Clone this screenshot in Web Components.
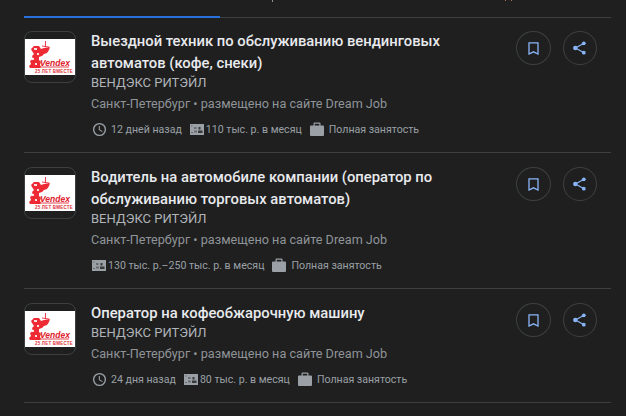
<!DOCTYPE html>
<html lang="ru">
<head>
<meta charset="utf-8">
<title>Вакансии</title>
<style>
  html, body { margin: 0; padding: 0; height: 100%; overflow: hidden; }
  body { background: #1f1f1f; font-family: Roboto, "Liberation Sans", Arial, sans-serif; }
</style>
</head>
<body>
<job-list>
  <job-tabs slot="tabs"></job-tabs>
  <job-card title-text="Выездной техник по обслуживанию вендинговых автоматов (кофе, снеки)" age="12 дней назад" pay="110 тыс. р. в месяц"></job-card>
  <job-card title-text="Водитель на автомобиле компании (оператор по обслуживанию торговых автоматов)" pay="130 тыс. р.–250 тыс. р. в месяц"></job-card>
  <job-card title-text="Оператор на кофеобжарочную машину" age="24 дня назад" pay="80 тыс. р. в месяц"></job-card>
</job-list>

<script>
const ICONS = {
  clock: `<svg width="15" height="15" viewBox="0 0 24 24" fill="currentColor"><path d="M12 1.500a10.500 10.500 0 1 0 0 21 10.500 10.500 0 0 0 0-21zm0 18.800a8.300 8.300 0 1 1 0-16.600 8.300 8.300 0 0 1 0 16.600zm.6-13.800h-1.700v6.300l5.300 3.200.9-1.400-4.500-2.700z"/></svg>`,
  money: `<svg width="14" height="11" viewBox="0 0 14 11"><path fill="currentColor" d="M0 0h14v11H0z"/><path fill="#6a6d70" d="M1 1.500h1.500v1H1zM1 8h2v1H1zM4 3h2.500v2H4zM4 6.500h3v2H4z"/><path fill="#3a3a3a" d="M8.500 3h2v2.500h-2zM8 6.500h4.500V9H8z"/></svg>`,
  bag: `<svg width="14" height="14" viewBox="0 0 14 14" fill="currentColor"><path d="M4.500 0.500h5a1 1 0 0 1 1 1V3.500H13a1 1 0 0 1 1 1V13a1 1 0 0 1-1 1H1a1 1 0 0 1-1-1V4.500a1 1 0 0 1 1-1h2.500V1.500a1 1 0 0 1 1-1zm.2 1.200v1.800h4.600V1.700z" fill-rule="evenodd"/></svg>`,
  bookmark: `<svg width="11" height="13" viewBox="0 0 11 13" fill="none" stroke="currentColor" stroke-width="1.300"><path d="M1 .8h9v11.200L5.500 9.800 1 12z"/></svg>`,
  share: `<svg width="13" height="14" viewBox="0 0 13 14" fill="currentColor" stroke="currentColor"><path fill="none" stroke-width="1.200" d="M10.500 2.500 2.500 7l8 4.500"/><circle cx="10.800" cy="2.300" r="1.900" stroke="none"/><circle cx="2.300" cy="7" r="2.200" stroke="none"/><circle cx="10.800" cy="11.700" r="1.900" stroke="none"/></svg>`,
};

// mascot is a rough drawing, the wordmark stays real text
const LOGO = `<svg width="50" height="36" viewBox="0 0 50 36" style="display:block">
  <defs><filter id="soft"><feGaussianBlur stdDeviation=".35"/></filter></defs>
  <rect width="50" height="36" fill="#fff"/>
  <g filter="url(#soft)">
    <path fill="#ee2a35" d="M6 10l3-3 5 0 2 3 3-1 6-1-1 3-2 3-3 1-2 2-3 1 0 3 2 2-1 3 1 2-1 1H7l-2 0-1-2 2-2-1-3 3-2-1-3 2-2-2-3z"/>
    <path stroke="#ee2a35" stroke-width=".9" fill="none" d="M20.500 2v6M17 7l7 1"/>
    <path fill="#fff" opacity=".85" d="M9 9h3v2H9zM12 14h2v2h-2zM7 19h2v2H7zM10 24h2v2h-2z"/>
    <path stroke="#e0202c" stroke-width=".8" d="M13 28h31"/>
  </g>
</svg>`;

class JobTabs extends HTMLElement {
  constructor() {
    super();
    this.attachShadow({ mode: "open" }).innerHTML = `
      <style>
        :host { display: block; height: 18px; margin-bottom: -1px; position: relative; }
        .bar { position: absolute; left: 0; right: 0; bottom: 0; height: 1px; background: #3c4043; }
        .active { position: absolute; left: 0; bottom: 0; width: 196px; height: 2px; background: #2a70dc; }
        .tip { position: absolute; top: 0; width: 1px; height: 2px; background: #8f9296; }
        .t2 { height: 1px; background: #a87050; }
      </style>
      <div class="tip" style="left:248px"></div>
      <div class="tip t2" style="left:481px"></div>
      <div class="tip t2" style="left:487px"></div>
      <div class="bar"></div>
      <div class="active"></div>`;
  }
}

class JobCard extends HTMLElement {
  constructor() {
    super();
    this.attachShadow({ mode: "open" });
  }

  connectedCallback() {
    const age = this.getAttribute("age");
    this.shadowRoot.innerHTML = `
      <style>
        :host { display: flex; box-sizing: border-box; border-bottom: 1px solid #3c4043; padding: 14px 14px 0 0; color: #9aa0a6; }
        .logo { flex: none; box-sizing: border-box; width: 52px; height: 52px; border: 1px solid #3c4043; border-radius: 8px; margin-right: 15px; display: flex; align-items: center; overflow: hidden; position: relative; }
        .mark { position: absolute; left: 15px; top: 27px; font: italic 700 8.500px/9px "Liberation Sans", sans-serif; color: #e0202c; }
        .since { position: absolute; left: 10px; top: 37px; font: 700 4.500px/5px "Liberation Sans", sans-serif; color: #e0303a; white-space: nowrap; letter-spacing: .2px; }
        .body { flex: 1; min-width: 0; margin-top: -1px; }
        h3 { margin: 0; width: 400px; font: 500 14.800px/22px Roboto, sans-serif; color: #e8eaed; }
        .company { font-size: 13px; line-height: 17px; color: #b0b4b9; }
        .place { font-size: 12.650px; line-height: 20px; margin-top: 2.500px; color: #8f9499; }
        .meta { display: flex; align-items: center; height: 16px; margin: 7.500px 0 15px 1px; font-size: 10.600px; color: #9aa0a6; }
        .meta svg { display: block; flex: none; }
        .age { margin: 0 8px 0 4px; }
        .pay { margin: 0 8px 0 2px; }
        .bag { margin-left: 5px; }
        .actions { flex: none; display: flex; gap: 12px; }
        .round { box-sizing: border-box; width: 34.500px; height: 34px; border: 1px solid #3c4043; border-radius: 50%; display: flex; align-items: center; justify-content: center; color: #8ab4f8; }
      </style>
      <div class="logo">${LOGO}<span class="mark">Vendex</span><span class="since">25 ЛЕТ ВМЕСТЕ</span></div>
      <div class="body">
        <h3>${this.getAttribute("title-text")}</h3>
        <div class="company">ВЕНДЭКС РИТЭЙЛ</div>
        <div class="place">Санкт-Петербург • размещено на сайте Dream Job</div>
        <div class="meta">
          ${age ? `${ICONS.clock}<span class="age">${age}</span>` : ""}
          ${ICONS.money}<span class="pay">${this.getAttribute("pay")}</span>
          ${ICONS.bag}<span class="bag">Полная занятость</span>
        </div>
      </div>
      <div class="actions">
        <div class="round">${ICONS.bookmark}</div>
        <div class="round">${ICONS.share}</div>
      </div>`;
  }
}

class JobList extends HTMLElement {
  constructor() {
    super();
    this.attachShadow({ mode: "open" }).innerHTML = `
      <style>
        :host { display: block; padding: 0 15px 0 24px; }
      </style>
      <slot name="tabs"></slot>
      <slot></slot>`;
  }
}

customElements.define("job-tabs", JobTabs);
customElements.define("job-card", JobCard);
customElements.define("job-list", JobList);
</script>
</body>
</html>
